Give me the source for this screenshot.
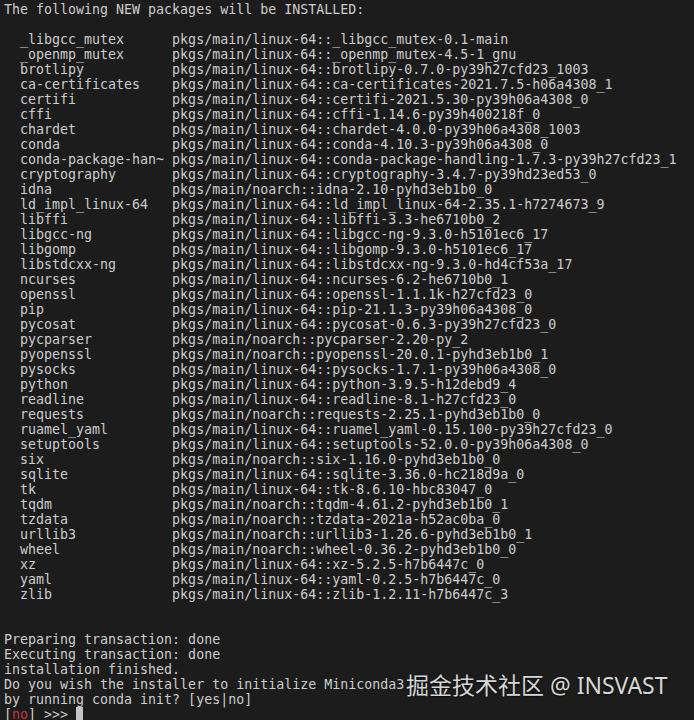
const packages: [string, string][] = [
  ["_libgcc_mutex", "pkgs/main/linux-64::_libgcc_mutex-0.1-main"],
  ["_openmp_mutex", "pkgs/main/linux-64::_openmp_mutex-4.5-1_gnu"],
  ["brotlipy", "pkgs/main/linux-64::brotlipy-0.7.0-py39h27cfd23_1003"],
  ["ca-certificates", "pkgs/main/linux-64::ca-certificates-2021.7.5-h06a4308_1"],
  ["certifi", "pkgs/main/linux-64::certifi-2021.5.30-py39h06a4308_0"],
  ["cffi", "pkgs/main/linux-64::cffi-1.14.6-py39h400218f_0"],
  ["chardet", "pkgs/main/linux-64::chardet-4.0.0-py39h06a4308_1003"],
  ["conda", "pkgs/main/linux-64::conda-4.10.3-py39h06a4308_0"],
  ["conda-package-han~", "pkgs/main/linux-64::conda-package-handling-1.7.3-py39h27cfd23_1"],
  ["cryptography", "pkgs/main/linux-64::cryptography-3.4.7-py39hd23ed53_0"],
  ["idna", "pkgs/main/noarch::idna-2.10-pyhd3eb1b0_0"],
  ["ld_impl_linux-64", "pkgs/main/linux-64::ld_impl_linux-64-2.35.1-h7274673_9"],
  ["libffi", "pkgs/main/linux-64::libffi-3.3-he6710b0_2"],
  ["libgcc-ng", "pkgs/main/linux-64::libgcc-ng-9.3.0-h5101ec6_17"],
  ["libgomp", "pkgs/main/linux-64::libgomp-9.3.0-h5101ec6_17"],
  ["libstdcxx-ng", "pkgs/main/linux-64::libstdcxx-ng-9.3.0-hd4cf53a_17"],
  ["ncurses", "pkgs/main/linux-64::ncurses-6.2-he6710b0_1"],
  ["openssl", "pkgs/main/linux-64::openssl-1.1.1k-h27cfd23_0"],
  ["pip", "pkgs/main/linux-64::pip-21.1.3-py39h06a4308_0"],
  ["pycosat", "pkgs/main/linux-64::pycosat-0.6.3-py39h27cfd23_0"],
  ["pycparser", "pkgs/main/noarch::pycparser-2.20-py_2"],
  ["pyopenssl", "pkgs/main/noarch::pyopenssl-20.0.1-pyhd3eb1b0_1"],
  ["pysocks", "pkgs/main/linux-64::pysocks-1.7.1-py39h06a4308_0"],
  ["python", "pkgs/main/linux-64::python-3.9.5-h12debd9_4"],
  ["readline", "pkgs/main/linux-64::readline-8.1-h27cfd23_0"],
  ["requests", "pkgs/main/noarch::requests-2.25.1-pyhd3eb1b0_0"],
  ["ruamel_yaml", "pkgs/main/linux-64::ruamel_yaml-0.15.100-py39h27cfd23_0"],
  ["setuptools", "pkgs/main/linux-64::setuptools-52.0.0-py39h06a4308_0"],
  ["six", "pkgs/main/noarch::six-1.16.0-pyhd3eb1b0_0"],
  ["sqlite", "pkgs/main/linux-64::sqlite-3.36.0-hc218d9a_0"],
  ["tk", "pkgs/main/linux-64::tk-8.6.10-hbc83047_0"],
  ["tqdm", "pkgs/main/noarch::tqdm-4.61.2-pyhd3eb1b0_1"],
  ["tzdata", "pkgs/main/noarch::tzdata-2021a-h52ac0ba_0"],
  ["urllib3", "pkgs/main/noarch::urllib3-1.26.6-pyhd3eb1b0_1"],
  ["wheel", "pkgs/main/noarch::wheel-0.36.2-pyhd3eb1b0_0"],
  ["xz", "pkgs/main/linux-64::xz-5.2.5-h7b6447c_0"],
  ["yaml", "pkgs/main/linux-64::yaml-0.2.5-h7b6447c_0"],
  ["zlib", "pkgs/main/linux-64::zlib-1.2.11-h7b6447c_3"],
];

const Line = ({ children }: { children?: React.ReactNode }) => (
  <div className="h-[15px] whitespace-pre">{children ?? " "}</div>
);

export default function App() {
  return (
    <div className="relative w-[694px] h-[720px] overflow-hidden bg-[#1c1c1c] text-[#cccccc] px-[4px] pt-[2px] font-['DejaVu_Sans_Mono',monospace] text-[13.3px] leading-[15px]">
      <Line>The following NEW packages will be INSTALLED:</Line>
      <Line />
      {packages.map(([name, spec]) => (
        <Line key={name}>
          {"  " + name.padEnd(19, " ") + spec}
        </Line>
      ))}
      <Line />
      <Line />
      <Line>Preparing transaction: done</Line>
      <Line>Executing transaction: done</Line>
      <Line>installation finished.</Line>
      <Line>Do you wish the installer to initialize Miniconda3</Line>
      <Line>by running conda init? [yes|no]</Line>
      <Line>
        [<span className="text-[#c8343f]">no</span>] &gt;&gt;&gt;{" "}
        <span className="inline-block w-[7px] h-[15px] align-top bg-[#c4c4c4]" />
      </Line>

      {/* watermark */}
      <div className="absolute left-[406px] top-[670px] whitespace-nowrap text-[#d6d6d6] font-['Noto_Sans','Noto_Sans_CJK_SC',sans-serif] text-[23px] leading-[30px] [text-shadow:0_1px_2px_rgba(0,0,0,0.7)]">
        掘金技术社区 @ INSVAST
      </div>
    </div>
  );
}
